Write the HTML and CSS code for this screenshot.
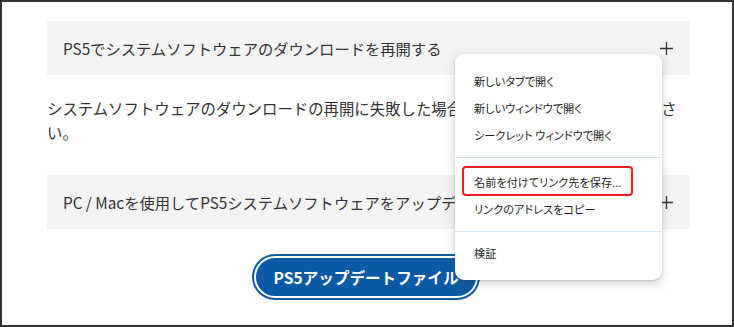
FILE: index.html
```html
<!DOCTYPE html>
<html lang="ja">
<head>
  <meta charset="UTF-8">
  <meta name="viewport" content="width=device-width, initial-scale=1.0">
  <link rel="stylesheet" href="styles.css">
  <title>PS5 システムソフトウェア</title>
</head>
<body>

<div class="frame">
  <div class="content">
    <div class="accordion">
      <span class="accordion-title">PS5でシステムソフトウェアのダウンロードを再開する</span>
      <svg class="plus" width="13" height="13" viewBox="0 0 13 13"><path d="M6.5 0v13M0 6.5h13" stroke="#333" stroke-width="1.3" fill="none"/></svg>
    </div>

    <p class="text">システムソフトウェアのダウンロードの再開に失敗した場合は、以下の方法を試してください。</p>

    <div class="accordion">
      <span class="accordion-title">PC / Macを使用してPS5システムソフトウェアをアップデートする</span>
      <svg class="plus" width="13" height="13" viewBox="0 0 13 13"><path d="M6.5 0v13M0 6.5h13" stroke="#333" stroke-width="1.3" fill="none"/></svg>
    </div>

    <div class="btn-row">
      <a class="download-btn" href="#">PS5アップデートファイル</a>
    </div>
  </div>

  <div class="context-menu">
    <div class="menu-item">新しいタブで開く</div>
    <div class="menu-item">新しいウィンドウで開く</div>
    <div class="menu-item">シークレット ウィンドウで開く</div>
    <div class="menu-sep"></div>
    <div class="menu-item">名前を付けてリンク先を保存...</div>
    <div class="menu-item">リンクのアドレスをコピー</div>
    <div class="menu-sep"></div>
    <div class="menu-item">検証</div>
    <div class="highlight"></div>
  </div>
</div>

</body>
</html>
```

FILE: styles.css
```css
body {
  margin: 0;
  font-family: "Noto Sans CJK JP", "Noto Sans", sans-serif;
  color: #333;
  background: #fff;
}

.frame {
  position: relative;
  width: 734px;
  height: 327px;
  box-sizing: border-box;
  border: 2px solid #333;
  padding: 19px 0 0 45px;
  overflow: hidden;
}

.content {
  width: 643px;
}

.accordion {
  display: flex;
  justify-content: space-between;
  align-items: center;
  height: 54px;
  padding: 0 17px 0 16px;
  box-sizing: border-box;
  background-color: #f4f4f4;
}

.accordion-title {
  font-size: 15.3px;
  white-space: nowrap;
  overflow: hidden;
}

.plus {
  flex-shrink: 0;
}

.text {
  margin: 21px 0 31px;
  font-size: 15.4px;
  line-height: 24px;
}

.btn-row {
  display: flex;
  justify-content: center;
  margin-top: 27px;
  padding-right: 5px;
}

.download-btn {
  display: inline-block;
  height: 38px;
  line-height: 38px;
  padding: 0 17px;
  border: 2px solid #fff;
  border-radius: 24px;
  box-shadow: 0 0 0 2px #0b5aa5;
  background-color: #0b5aa5;
  color: #fff;
  font-size: 15.6px;
  font-weight: bold;
  text-decoration: none;
}

.context-menu {
  position: absolute;
  left: 453px;
  top: 52px;
  width: 207px;
  padding: 14px 0 13px;
  background: #fff;
  border-radius: 9px;
  box-shadow: 0 3px 9px 2px rgba(60, 64, 67, 0.15), 0 1px 2px rgba(60, 64, 67, 0.22);
}

.menu-item {
  height: 27px;
  line-height: 27px;
  padding-left: 19px;
  font-size: 11.2px;
  color: #1f1f1f;
  font-feature-settings: "palt";
}

.menu-sep {
  height: 1px;
  margin: 8px 0 11px;
  background: #d3e3fd;
}

.menu-sep + .menu-item + .menu-item + .menu-sep {
  margin: 8px 0 8px;
}

.highlight {
  position: absolute;
  left: 7px;
  top: 112px;
  width: 171px;
  height: 30px;
  box-sizing: border-box;
  border: 2.5px solid #ee1f1f;
  border-radius: 4px;
}
```
